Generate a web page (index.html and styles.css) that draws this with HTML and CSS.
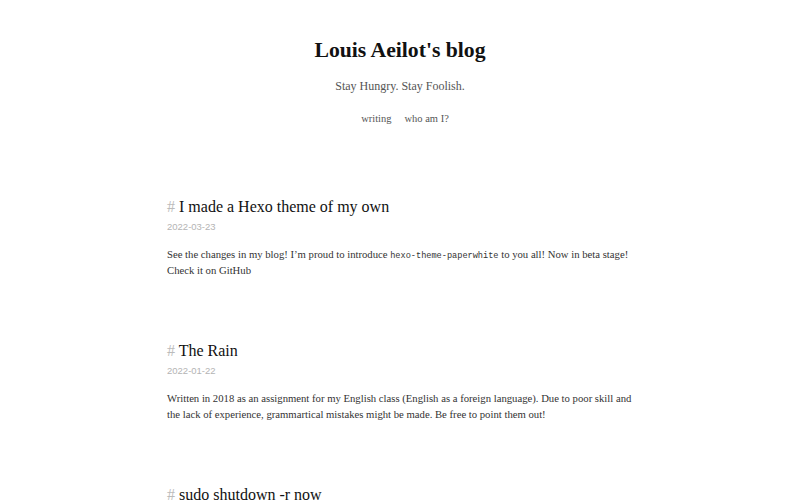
FILE: index.html
```html
<!DOCTYPE html>
<html>
<head>
<meta charset="utf-8">
<link rel="stylesheet" href="styles.css">
</head>
<body>
<header class="header">
  <h1 class="site-title">Louis Aeilot's blog</h1>
  <p class="subtitle">Stay Hungry. Stay Foolish.</p>
  <nav class="nav"><a href="#">writing</a><a href="#">who am I?</a></nav>
</header>
<main class="posts">
  <article class="post">
    <h2 class="post-title"><span class="hash">#</span> I made a Hexo theme of my own</h2>
    <div class="date">2022-03-23</div>
    <p class="excerpt">See the changes in my blog! I’m proud to introduce <code>hexo-theme-paperwhite</code> to you all! Now in beta stage! Check it on GitHub</p>
  </article>
  <article class="post">
    <h2 class="post-title"><span class="hash">#</span> The Rain</h2>
    <div class="date">2022-01-22</div>
    <p class="excerpt">Written in 2018 as an assignment for my English class (English as a foreign language). Due to poor skill and the lack of experience, grammartical mistakes might be made. Be free to point them out!</p>
  </article>
  <article class="post">
    <h2 class="post-title"><span class="hash">#</span> sudo shutdown -r now</h2>
    <div class="date">2021-12-01</div>
    <p class="excerpt">Placeholder.</p>
  </article>
</main>
</body>
</html>
```
FILE: styles.css
```css
body {
  margin: 0;
  font-family: "Liberation Serif", "Times New Roman", serif;
  color: #222;
  background: #fff;
}
.header {
  text-align: center;
  padding-top: 37px;
}
.site-title {
  margin: 0;
  font-size: 21.7px;
  line-height: 26px;
  color: #111;
}
.subtitle {
  margin: 16px 0 0;
  font-size: 12px;
  line-height: 14px;
  color: #555;
}
.nav {
  margin-top: 19px;
  padding-left: 10px;
  display: flex;
  justify-content: center;
  gap: 13px;
  font-size: 10.5px;
  line-height: 14px;
}
.nav a {
  color: #555;
  text-decoration: none;
}
.posts {
  width: 466px;
  margin: 0 auto;
  padding-top: 71px;
}
.post {
  margin-bottom: 63px;
}
.post-title {
  margin: 0;
  font-weight: normal;
  font-size: 16px;
  line-height: 20px;
  color: #111;
}
.hash {
  color: #bbb;
}
.date {
  margin-top: 3px;
  font-family: "Liberation Sans", Arial, sans-serif;
  font-size: 9.5px;
  line-height: 14px;
  color: #b4b4b4;
}
.excerpt {
  margin: 12px 0 0;
  font-size: 10.7px;
  line-height: 16px;
  color: #333;
}
code {
  font-family: "Liberation Mono", "Courier New", monospace;
  font-size: 8.6px;
  line-height: 1;
}
```
